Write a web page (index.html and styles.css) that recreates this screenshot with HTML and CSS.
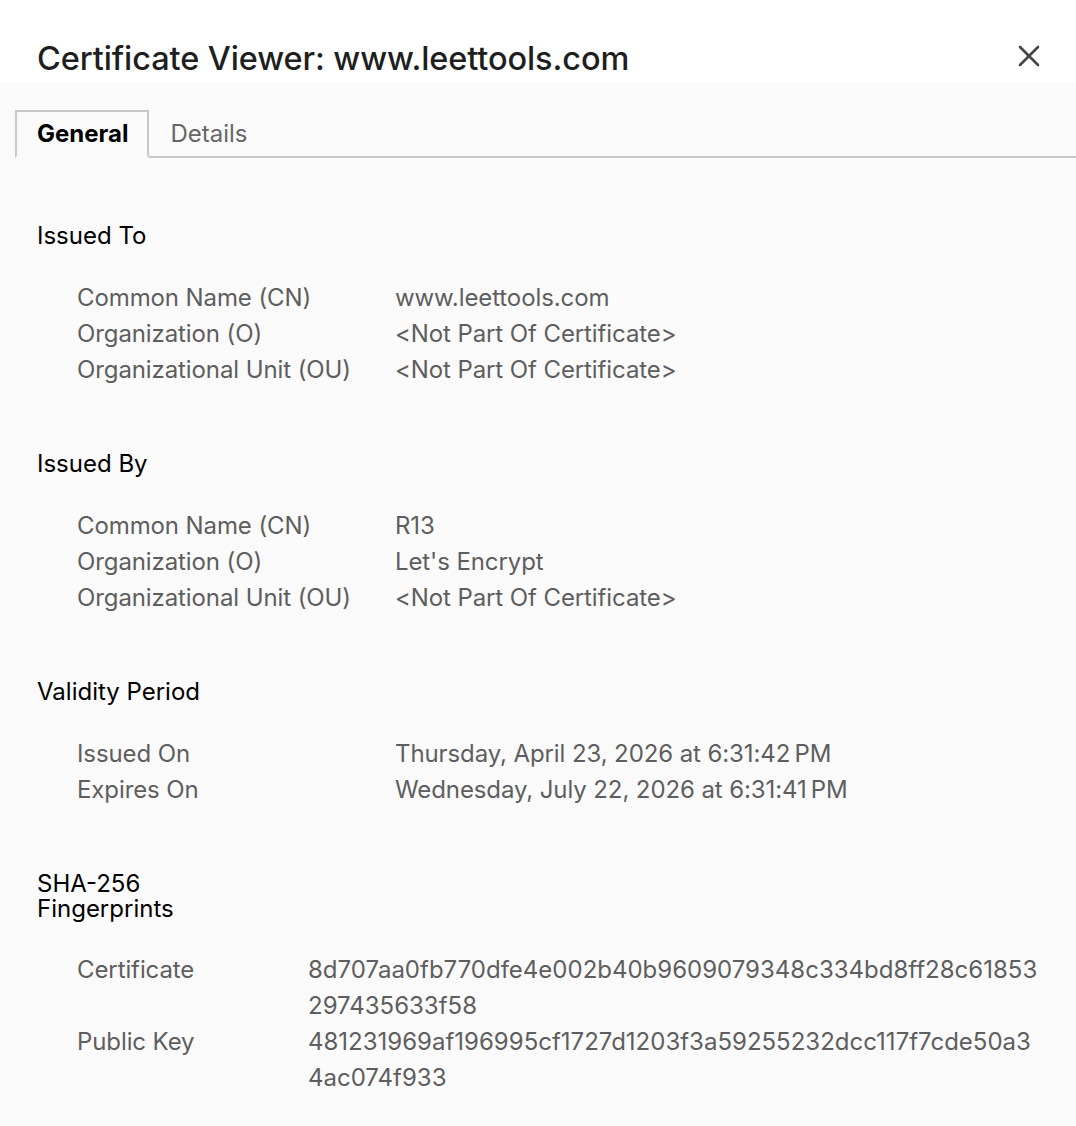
FILE: index.html
```html
<!DOCTYPE html>
<html lang="en">
<head>
<meta charset="utf-8">
<title>Certificate Viewer</title>
<link rel="stylesheet" href="styles.css">
</head>
<body>
<div class="dialog">
  <header class="header">
    <h1 class="title">Certificate Viewer: www.leettools.com</h1>
    <button class="close" aria-label="Close">
      <svg width="22" height="22" viewBox="0 0 22 22"><path d="M2 2 L20 20 M20 2 L2 20" stroke="#454545" stroke-width="2.6" stroke-linecap="round" fill="none"/></svg>
    </button>
  </header>
  <nav class="tabs">
    <div class="tab active">General</div>
    <div class="tab">Details</div>
    <div class="tab-fill"></div>
  </nav>
  <main class="content">
    <section class="section">
      <h2 class="heading">Issued To</h2>
      <div class="grid">
        <div class="label">Common Name (CN)</div><div class="value">www.leettools.com</div>
        <div class="label">Organization (O)</div><div class="value">&lt;Not Part Of Certificate&gt;</div>
        <div class="label">Organizational Unit (OU)</div><div class="value">&lt;Not Part Of Certificate&gt;</div>
      </div>
    </section>
    <section class="section">
      <h2 class="heading">Issued By</h2>
      <div class="grid">
        <div class="label">Common Name (CN)</div><div class="value">R13</div>
        <div class="label">Organization (O)</div><div class="value">Let's Encrypt</div>
        <div class="label">Organizational Unit (OU)</div><div class="value">&lt;Not Part Of Certificate&gt;</div>
      </div>
    </section>
    <section class="section">
      <h2 class="heading">Validity Period</h2>
      <div class="grid">
        <div class="label">Issued On</div><div class="value">Thursday, April 23, 2026 at 6:31:42&#8239;PM</div>
        <div class="label">Expires On</div><div class="value">Wednesday, July 22, 2026 at 6:31:41&#8239;PM</div>
      </div>
    </section>
    <section class="section">
      <h2 class="heading narrow">SHA-256 Fingerprints</h2>
      <div class="grid fp">
        <div class="label">Certificate</div><div class="value hex">8d707aa0fb770dfe4e002b40b9609079348c334bd8ff28c61853297435633f58</div>
        <div class="label">Public Key</div><div class="value hex">481231969af196995cf1727d1203f3a59255232dcc117f7cde50a34ac074f933</div>
      </div>
    </section>
  </main>
</div>
</body>
</html>
```
FILE: styles.css
```css
* { box-sizing: border-box; }
html, body { margin: 0; padding: 0; }
body {
  background: #fafafa;
  font-family: Inter, "Noto Sans", sans-serif;
  min-height: 1126px;
}
.dialog { display: flex; flex-direction: column; }
.header {
  background: #ffffff;
  height: 82px;
  display: flex;
  align-items: flex-end;
  justify-content: space-between;
  padding: 0 36px 0 37px;
}
.title {
  margin: 0;
  font-size: 32.5px;
  font-weight: 500;
  color: #1f1f1f;
  line-height: 40px;
  padding-bottom: 3px;
  letter-spacing: -0.1px;
}
.close {
  border: 0;
  background: none;
  padding: 0;
  width: 22px;
  height: 22px;
  margin-bottom: 15px;
  display: flex;
}
.tabs {
  display: flex;
  align-items: flex-end;
  padding: 28px 0 0 15px;
}
.tab {
  font-size: 24px;
  line-height: 44px;
  color: #666666;
  padding: 0 21px 0 21px;
  border-bottom: 2px solid #c8c8c8;
}
.tab.active {
  font-weight: 700;
  color: #000;
  border: 2px solid #c8c8c8;
  border-bottom: 2px solid transparent;
  padding: 0 19px 0 20px;
}
.tab-fill {
  flex: 1;
  border-bottom: 2px solid #c8c8c8;
}
.content {
  padding: 0 32px 40px 37px;
}
.section { margin-top: 63px; }
.section:first-child { margin-top: 65px; }
.heading {
  margin: 0;
  font-size: 24px;
  font-weight: 400;
  line-height: 25px;
  color: #000;
}
.heading.narrow { max-width: 200px; }
.grid {
  display: grid;
  grid-template-columns: 318px 1fr;
  margin-top: 32px;
  padding-left: 40px;
  font-size: 24px;
  line-height: 36px;
  color: #5e5e5e;
  letter-spacing: -0.1px;
}
.grid.fp { grid-template-columns: 231px 1fr; margin-top: 31px; }
.hex { word-break: break-all; letter-spacing: 0; }
```
